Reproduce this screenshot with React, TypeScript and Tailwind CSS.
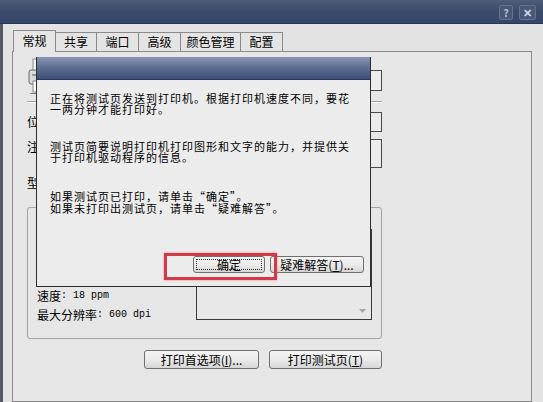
import React from "react";

const cjk = "font-['Noto_Sans_CJK_SC','Liberation_Sans',sans-serif]";
const mono = "font-['Liberation_Mono','Noto_Sans_CJK_SC',monospace]";

const tabs = [
  { label: "常规", w: "w-[43px]", active: true },
  { label: "共享", w: "w-[41px]" },
  { label: "端口", w: "w-[42px]" },
  { label: "高级", w: "w-[42px]" },
  { label: "颜色管理", w: "w-[60px]" },
  { label: "配置", w: "w-[42px]" },
];

function WinButton({ children, className = "" }: { children: React.ReactNode; className?: string }) {
  return (
    <div
      className={`flex items-center justify-center rounded-[3px] border border-[#707070] bg-linear-to-b from-[#f4f4f4] via-[#ebebeb] to-[#d6d6d6] text-[12px] leading-none text-black ${className}`}
    >
      {children}
    </div>
  );
}

function PrinterIcon() {
  return (
    <svg width="28" height="38" viewBox="0 0 28 38">
      <rect x="6" y="2" width="14" height="12" fill="#f4f4f4" stroke="#8a8a8a" />
      <rect x="2" y="13" width="22" height="14" rx="2" fill="#d9d9d9" stroke="#6c6c6c" />
      <rect x="5" y="17" width="12" height="2" fill="#9a9a9a" />
      <rect x="6" y="24" width="14" height="11" fill="#fafafa" stroke="#8a8a8a" />
      <rect x="3" y="36" width="22" height="1" fill="#7d7d7d" />
    </svg>
  );
}

function Spec({ name, value }: { name: string; value: string }) {
  return (
    <div className="flex items-center whitespace-nowrap leading-[19px]">
      <span className="text-[12px]">{name}</span>
      <span className={`${mono} text-[10px]`}>: {value}</span>
    </div>
  );
}

export default function App() {
  return (
    <div className={`relative h-[402px] w-[543px] overflow-hidden bg-[#e3e3e3] text-[12px] text-black ${cjk}`}>
      {/* window title bar */}
      <div className="flex h-[24px] items-start justify-end gap-[6px] border-b border-[#2a3654] bg-linear-to-b from-[#505d78] via-[#3c4a6a] to-[#36456a] pr-[7px] pt-[5px]">
        <div className="flex h-[15px] w-[14px] items-center justify-center rounded-[2px] border border-[#66738f] bg-[#4a5878] text-[10px] font-bold leading-none text-[#b9c2d6]">
          ?
        </div>
        <div className="flex h-[15px] w-[17px] items-center justify-center rounded-[2px] border border-[#66738f] bg-[#4a5878] text-[11px] font-bold leading-none text-[#d0d6e4]">
          ✕
        </div>
      </div>

      {/* window body */}
      <div className="flex h-[378px] flex-col border-l-[3px] border-[#55585e] pl-[9px]">
        <div className="relative z-10 -mb-px mt-[6px] flex h-[22px] items-end pl-[1px]">
          {tabs.map((t) =>
            t.active ? (
              <div
                key={t.label}
                className={`${t.w} flex h-[22px] items-center justify-center border-x border-t border-[#8a8a8a] bg-[#e6e6e6] pb-[2px] text-[12px]`}
              >
                {t.label}
              </div>
            ) : (
              <div
                key={t.label}
                className={`${t.w} flex h-[20px] items-center justify-center border border-l-0 border-[#8a8a8a] bg-[#e4e4e4] text-[12px]`}
              >
                {t.label}
              </div>
            )
          )}
        </div>

        <div className="w-[520px] flex-1 border border-[#8a8a8a] bg-[#e6e6e6] pl-[14px] pt-[5px]">
          <div className="flex w-[355px] flex-col">
            <div className="flex h-[40px]">
              <PrinterIcon />
              <div className="ml-auto mt-[13px] h-[21px] w-[290px] border border-[#4a4a4a] bg-[#ececec]" />
            </div>
            <div className="mt-[4px] h-[2px] border-b border-t border-b-white border-t-[#a0a0a0]" />

            <div className="mt-[9px] flex h-[20px] items-center">
              <span className="w-[63px]">位置(L):</span>
              <div className="h-full flex-1 border border-[#4a4a4a] bg-[#ececec]" />
            </div>
            <div className="mt-[7px] flex h-[29px]">
              <span className="w-[63px] leading-[16px]">注释(C):</span>
              <div className="h-full flex-1 border border-[#4a4a4a] bg-[#ececec]" />
            </div>
            <div className="mt-[9px] flex leading-[12px]">
              <span className="w-[63px]">型号(O):</span>
              <span>HP LaserJet P1007</span>
            </div>

            <div className="mt-[18px] flex h-[132px] rounded-[3px] border border-[#a3a3a3] pl-[9px] pr-[9px] pt-[21px]">
              <div className="flex flex-1 flex-col">
                <Spec name="颜色" value="否" />
                <Spec name="双面" value="否" />
                <Spec name="装订" value="否" />
                <Spec name="速度" value="18 ppm" />
                <Spec name="最大分辨率" value="600 dpi" />
              </div>
              <div className="flex h-[91px] w-[176px] items-end justify-end border border-[#3a3a3a] bg-[#e8e8e8] pb-[6px] pr-[5px]">
                <svg width="7" height="4" viewBox="0 0 7 4">
                  <path d="M0 0 H7 L3.5 4 Z" fill="#a8a8a8" />
                </svg>
              </div>
            </div>

            <div className="mt-[11px] flex justify-end gap-[10px]">
              <WinButton className="h-[19px] w-[115px]">
                打印首选项(<span className="underline">I</span>)...
              </WinButton>
              <WinButton className="h-[19px] w-[113px]">
                打印测试页(<span className="underline">T</span>)
              </WinButton>
            </div>
          </div>
        </div>
      </div>

      {/* test page dialog */}
      <div className="absolute left-[36px] top-[57px] flex h-[230px] w-[335px] flex-col border-x border-b border-[#2e2e2e] bg-[#ececec]">
        <div className="h-[23px] border-b border-[#2b3a5c] bg-linear-to-b from-[#8795b2] via-[#5d6d92] to-[#3d4f78]" />
        <div className="flex flex-1 flex-col whitespace-nowrap pl-[13px] pr-[6px] pt-[13px]">
          <div className="text-[11px] leading-[11px] tracking-[1px]">
            <div>正在将测试页发送到打印机。根据打印机速度不同，要花</div>
            <div>一两分钟才能打印好。</div>
          </div>
          <div className="mt-[26px] text-[11px] leading-[11px] tracking-[1px]">
            <div>测试页简要说明打印机打印图形和文字的能力，并提供关</div>
            <div>于打印机驱动程序的信息。</div>
          </div>
          <div className="mt-[27px] text-[11px] leading-[12px] tracking-[1px]">
            <div>如果测试页已打印，请单击“确定”。</div>
            <div>如果未打印出测试页，请单击“疑难解答”。</div>
          </div>
          <div className="mt-[42px] flex justify-end gap-[5px]">
            <WinButton className="h-[17px] w-[72px] border-[#3c5a8a] p-[2px]">
              <div className="flex h-full w-full items-center justify-center border border-dotted border-[#333]">
                确定
              </div>
            </WinButton>
            <WinButton className="h-[17px] w-[94px]">
              疑难解答(<span className="underline">T</span>)...
            </WinButton>
          </div>
        </div>
      </div>

      {/* red highlight */}
      <div className="absolute left-[164px] top-[253px] h-[27px] w-[113px] border-[3px] border-[#cf3b4b] shadow-[0_0_2px_#e47a86]" />
    </div>
  );
}
